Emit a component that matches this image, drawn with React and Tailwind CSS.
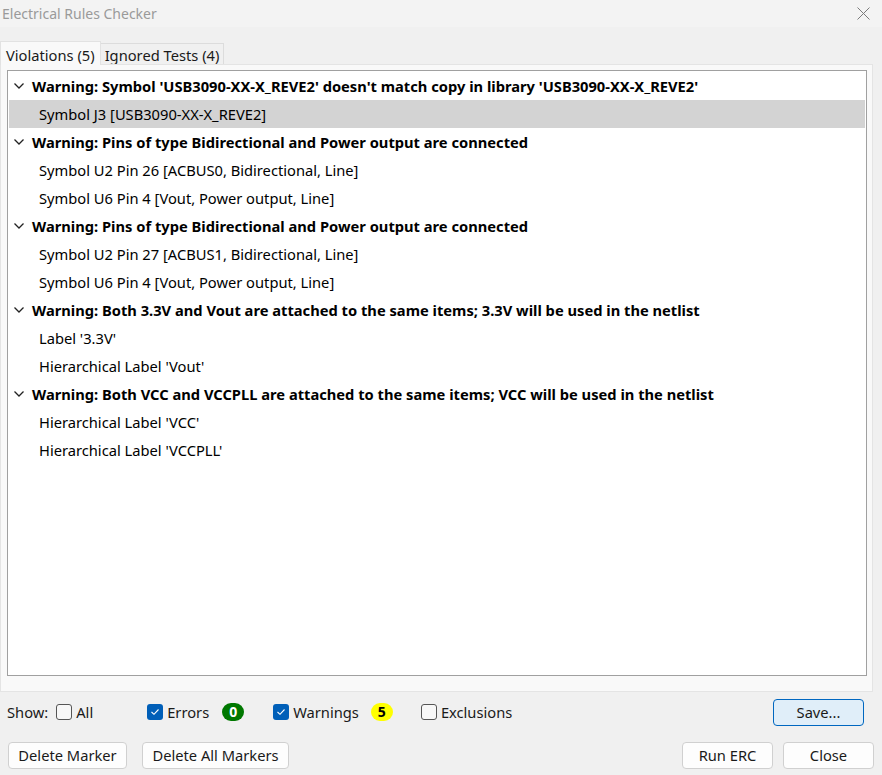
import React, { useState } from 'react';

const groups = [
    {
        title: "Warning: Symbol 'USB3090-XX-X_REVE2' doesn't match copy in library 'USB3090-XX-X_REVE2'",
        items: ['Symbol J3 [USB3090-XX-X_REVE2]'],
    },
    {
        title: 'Warning: Pins of type Bidirectional and Power output are connected',
        items: ['Symbol U2 Pin 26 [ACBUS0, Bidirectional, Line]', 'Symbol U6 Pin 4 [Vout, Power output, Line]'],
    },
    {
        title: 'Warning: Pins of type Bidirectional and Power output are connected',
        items: ['Symbol U2 Pin 27 [ACBUS1, Bidirectional, Line]', 'Symbol U6 Pin 4 [Vout, Power output, Line]'],
    },
    {
        title: 'Warning: Both 3.3V and Vout are attached to the same items; 3.3V will be used in the netlist',
        items: ["Label '3.3V'", "Hierarchical Label 'Vout'"],
    },
    {
        title: 'Warning: Both VCC and VCCPLL are attached to the same items; VCC will be used in the netlist',
        items: ["Hierarchical Label 'VCC'", "Hierarchical Label 'VCCPLL'"],
    },
];

const Chevron = () => (
    <svg width="10" height="6" viewBox="0 0 10 6" className="shrink-0">
        <path d="M0.5 0.5 L5 5 L9.5 0.5" fill="none" stroke="#222" strokeWidth="1.3" />
    </svg>
);

const Check = ({ checked }) =>
    checked ? (
        <span className="w-4 h-4 rounded-[3px] bg-[#005fb8] flex items-center justify-center">
            <svg width="10" height="8" viewBox="0 0 10 8">
                <path d="M1.5 4 L4 6.3 L8.5 1.5" fill="none" stroke="#fff" strokeWidth="1.1" />
            </svg>
        </span>
    ) : (
        <span className="w-4 h-4 rounded-[3px] border border-[#555] bg-[#f7f7f7]" />
    );

const Btn = ({ children, className = '' }) => (
    <button className={`h-[27px] rounded-[4px] border border-[#d0d0d0] bg-[#fdfdfd] text-[14.7px] text-[#1a1a1a] flex items-center justify-center ${className}`}>
        {children}
    </button>
);

export default function App() {
    const [selected] = useState('0-0');

    return (
        <div className="w-[882px] h-[775px] bg-[#f0f0f0] flex flex-col overflow-hidden" style={{ fontFamily: '"Noto Sans", "Open Sans", sans-serif' }}>
            {/* Title bar */}
            <div className="h-[27px] bg-[#f3f3f3] flex items-center justify-between pl-[2px] pr-[12px] shrink-0">
                <span className="text-[14px] text-[#9a9a9a]">Electrical Rules Checker</span>
                <svg width="13" height="13" viewBox="0 0 13 13">
                    <path d="M0.5 0.5 L12.5 12.5 M12.5 0.5 L0.5 12.5" stroke="#7a7a7a" strokeWidth="1" />
                </svg>
            </div>

            {/* Tabs */}
            <div className="flex items-end h-[37px] shrink-0">
                <div className="h-[24px] pt-[3px] px-[5px] bg-[#f9f9f9] border border-b-0 border-[#e2e2e2] text-[14.7px] text-[#1a1a1a] flex items-center whitespace-nowrap relative top-[1px]">
                    Violations (5)
                </div>
                <div className="h-[21px] pt-[3px] px-[4px] bg-[#f0f0f0] border border-b-0 border-l-0 border-[#dcdcdc] text-[14.7px] text-[#1a1a1a] flex items-center whitespace-nowrap">
                    Ignored Tests (4)
                </div>
            </div>

            {/* Tab panel */}
            <div className="w-[873px] h-[628px] bg-[#f9f9f9] border border-[#e4e4e4] pt-[5px] pl-[6px] shrink-0">
                <div className="w-[860px] h-[606px] bg-white border border-[#a0a0a0] pt-[1px] px-[1px]">
                    {groups.map((g, gi) => (
                        <div key={gi}>
                            <div className="h-[28px] flex items-center gap-[8px] pl-[5px] text-[14.7px] font-bold text-black whitespace-nowrap">
                                <Chevron />
                                <span>{g.title}</span>
                            </div>
                            {g.items.map((it, ii) => (
                                <div
                                    key={ii}
                                    className={`h-[28px] flex items-center pl-[30px] text-[14.7px] text-black whitespace-nowrap ${selected === `${gi}-${ii}` ? 'bg-[#d3d3d3]' : ''}`}
                                >
                                    {it}
                                </div>
                            ))}
                        </div>
                    ))}
                </div>
            </div>

            {/* Filter row */}
            <div className="h-[40px] flex items-center pl-[7px] text-[14.7px] text-[#1a1a1a] shrink-0">
                <span>Show:</span>
                <span className="ml-[8px] flex items-center gap-[4px]"><Check />All</span>
                <span className="ml-[54px] flex items-center gap-[4px]"><Check checked />Errors</span>
                <span className="ml-[13px] w-[22px] h-[18px] rounded-full bg-[#007800] text-white font-bold text-[14px] flex items-center justify-center leading-none">0</span>
                <span className="ml-[29px] flex items-center gap-[4px]"><Check checked />Warnings</span>
                <span className="ml-[12px] w-[22px] h-[18px] rounded-full bg-[#ffff00] text-black font-bold text-[14px] flex items-center justify-center leading-none">5</span>
                <span className="ml-[28px] flex items-center gap-[4px]"><Check />Exclusions</span>
                <button className="ml-auto mr-[18px] w-[91px] h-[27px] rounded-[4px] border border-[#0067c0] bg-[#e0eef9] text-[14.7px] text-[#1a1a1a]">Save...</button>
            </div>

            {/* Bottom buttons */}
            <div className="flex items-center pl-[8px] pr-[8px] pt-[10px]">
                <Btn className="w-[119px]">Delete Marker</Btn>
                <Btn className="w-[147px] ml-[15px]">Delete All Markers</Btn>
                <Btn className="w-[91px] ml-auto">Run ERC</Btn>
                <Btn className="w-[91px] ml-[10px]">Close</Btn>
            </div>
        </div>
    );
}
